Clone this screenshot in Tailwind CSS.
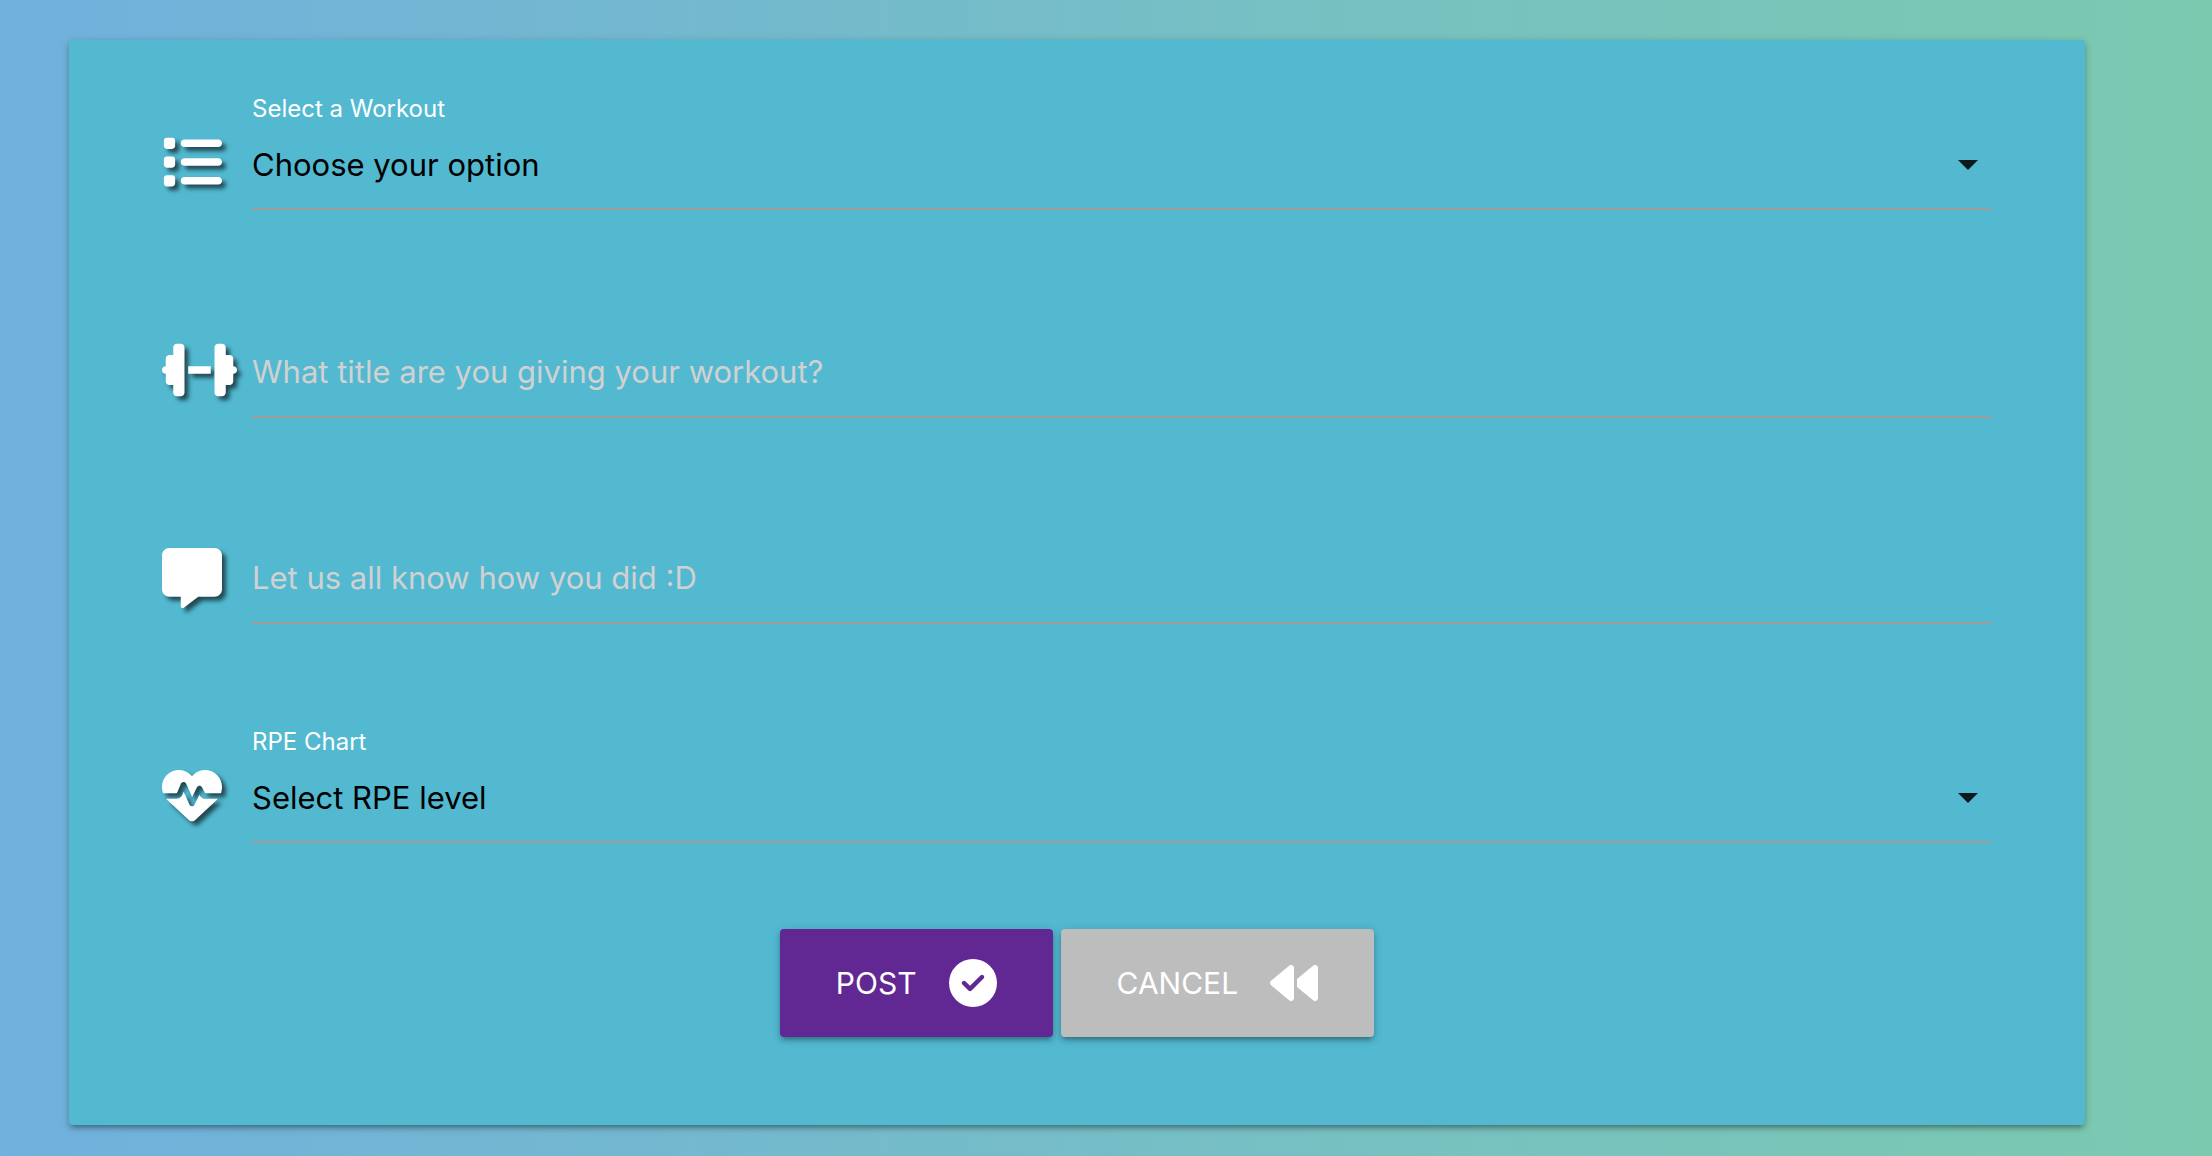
<!DOCTYPE html>
<html lang="en">
<head>
<meta charset="utf-8">
<meta name="viewport" content="width=device-width, initial-scale=1">
<title>Post a workout</title>
<script src="https://cdn.jsdelivr.net/npm/@tailwindcss/browser@4"></script>
</head>
<body class="min-h-screen bg-linear-to-r/srgb from-[#70b1dd] to-[#7bcab0] pt-10 pr-[127px] pb-8 pl-[69px] font-[Inter,sans-serif]">
<form class="rounded-sm bg-[#52b9d1] px-[93px] pt-14 pb-[88px] shadow-[0_4px_4px_0_rgba(0,0,0,0.14),0_6px_2px_-4px_rgba(0,0,0,0.12),0_2px_10px_0_rgba(0,0,0,0.2)]">

  <div class="flex h-[114px]">
    <div class="w-[90px] shrink-0 pt-9">
      <svg class="h-[60px] w-[60px] overflow-visible fill-white drop-shadow-[4px_4px_2px_rgba(0,0,0,0.6)]" viewBox="0 0 512 512" aria-hidden="true"><path d="M40 48C26.700 48 16 58.700 16 72v48c0 13.300 10.700 24 24 24H88c13.300 0 24-10.700 24-24V72c0-13.300-10.700-24-24-24H40zM192 64c-17.700 0-32 14.300-32 32s14.300 32 32 32H480c17.700 0 32-14.300 32-32s-14.300-32-32-32H192zm0 160c-17.700 0-32 14.300-32 32s14.300 32 32 32H480c17.700 0 32-14.300 32-32s-14.300-32-32-32H192zm0 160c-17.700 0-32 14.300-32 32s14.300 32 32 32H480c17.700 0 32-14.300 32-32s-14.300-32-32-32H192zM16 232v48c0 13.300 10.700 24 24 24H88c13.300 0 24-10.700 24-24V232c0-13.300-10.700-24-24-24H40c-13.300 0-24 10.700-24 24zM40 368c-13.300 0-24 10.700-24 24v48c0 13.300 10.700 24 24 24H88c13.300 0 24-10.700 24-24V392c0-13.300-10.700-24-24-24H40z"/></svg>
    </div>
    <div class="flex min-w-0 flex-1 flex-col">
      <label for="workout" class="h-[26px] text-2xl leading-[26px] text-white">Select a Workout</label>
      <div class="relative flex-1 border-b-2 border-[#9e9e9e]">
        <select id="workout" class="h-full w-full appearance-none bg-transparent text-[31px] text-black outline-none"><option>Choose your option</option></select>
        <svg class="pointer-events-none absolute top-[38px] right-[14px] h-[10px] w-5 fill-[#0b1a1d]" viewBox="0 0 20 10" aria-hidden="true"><path d="M0 0h20L10 10z"/></svg>
      </div>
    </div>
  </div>

  <div class="mt-[118px] flex h-[90px]">
    <div class="w-[90px] shrink-0 pt-3">
      <svg class="h-[60px] w-[75px] overflow-visible fill-white drop-shadow-[4px_4px_2px_rgba(0,0,0,0.6)]" viewBox="0 0 640 512" aria-hidden="true"><path d="M96 64c0-17.700 14.300-32 32-32h32c17.700 0 32 14.300 32 32V224v64V448c0 17.700-14.300 32-32 32H128c-17.700 0-32-14.300-32-32V384H64c-17.700 0-32-14.300-32-32V288c-17.700 0-32-14.300-32-32s14.300-32 32-32V160c0-17.700 14.300-32 32-32H96V64zm448 0v64h32c17.700 0 32 14.300 32 32v64c17.700 0 32 14.300 32 32s-14.300 32-32 32v64c0 17.700-14.300 32-32 32H544v64c0 17.700-14.300 32-32 32H480c-17.700 0-32-14.300-32-32V288 224 64c0-17.700 14.300-32 32-32h32c17.700 0 32 14.300 32 32zM416 224v64H224V224H416z"/></svg>
    </div>
    <input type="text" aria-label="Workout title" placeholder="What title are you giving your workout?" class="min-w-0 flex-1 border-b-2 border-[#9e9e9e] bg-transparent text-[31px] text-black outline-none placeholder:text-[#d1d1d1]">
  </div>

  <div class="mt-[116px] flex h-[90px]">
    <div class="w-[90px] shrink-0 pt-3.5">
      <svg class="h-[60px] w-[60px] overflow-visible fill-white drop-shadow-[4px_4px_2px_rgba(0,0,0,0.6)]" viewBox="0 0 512 512" aria-hidden="true"><path d="M64 0C28.700 0 0 28.700 0 64V352c0 35.300 28.700 64 64 64h96v80c0 6.100 3.400 11.600 8.800 14.300s11.900 2.100 16.800-1.500L309.300 416H448c35.300 0 64-28.700 64-64V64c0-35.300-28.700-64-64-64H64z"/></svg>
    </div>
    <input type="text" aria-label="Workout comments" placeholder="Let us all know how you did :D" class="min-w-0 flex-1 border-b-2 border-[#9e9e9e] bg-transparent text-[31px] text-black outline-none placeholder:text-[#d1d1d1]">
  </div>

  <div class="mt-[105px] flex h-[114px]">
    <div class="w-[90px] shrink-0 pt-9">
      <svg class="h-[60px] w-[60px] overflow-visible fill-white drop-shadow-[4px_4px_2px_rgba(0,0,0,0.6)]" viewBox="0 0 512 512" aria-hidden="true"><path d="M228.300 469.100L47.600 300.400c-4.200-3.900-8.200-8.100-11.900-12.400h87c22.600 0 43-13.600 51.700-34.500l10.500-25.200 49.300 109.500c3.800 8.500 12.100 14 21.400 14.100s17.800-5 22-13.300L320 253.700l1.700 3.400c9.500 19 28.900 31 50.100 31H476.300c-3.700 4.300-7.700 8.500-11.900 12.400L283.700 469.100c-7.500 7-17.400 10.900-27.700 10.900s-20.200-3.900-27.700-10.900zM503.700 240h-132c-3 0-5.800-1.700-7.200-4.400l-23.200-46.300c-4.100-8.100-12.400-13.300-21.500-13.300s-17.400 5.100-21.500 13.300l-41.400 82.800L205.900 158.200c-3.900-8.700-12.700-14.300-22.200-14.100s-18.100 5.900-21.800 14.800l-31.800 76.300c-1.200 3-4.200 4.900-7.400 4.900H16c-2.600 0-5 .4-7.300 1.100C3 225.200 0 208.200 0 190.900v-5.800c0-69.900 50.500-129.500 119.400-141C165 36.500 211.400 51.400 244 84l12 12 12-12c32.600-32.600 79-47.500 124.600-39.900C461.500 55.600 512 115.200 512 185.100v5.800c0 16.900-2.800 33.500-8.300 49.100z"/></svg>
    </div>
    <div class="flex min-w-0 flex-1 flex-col">
      <label for="rpe" class="h-[26px] text-2xl leading-[26px] text-white">RPE Chart</label>
      <div class="relative flex-1 border-b-2 border-[#9e9e9e]">
        <select id="rpe" class="h-full w-full appearance-none bg-transparent text-[31px] text-black outline-none"><option>Select RPE level</option></select>
        <svg class="pointer-events-none absolute top-[38px] right-[14px] h-[10px] w-5 fill-[#0b1a1d]" viewBox="0 0 20 10" aria-hidden="true"><path d="M0 0h20L10 10z"/></svg>
      </div>
    </div>
  </div>

  <div class="mt-[86px] flex justify-center gap-2">
    <button type="submit" class="flex h-[108px] items-center gap-8 rounded-sm bg-[#612893] px-14 text-[30px] text-white uppercase shadow-[0_4px_4px_0_rgba(0,0,0,0.14),0_6px_2px_-4px_rgba(0,0,0,0.12),0_2px_10px_0_rgba(0,0,0,0.2)]">Post
      <svg class="size-12 fill-white" viewBox="0 0 512 512" aria-hidden="true"><path d="M256 512A256 256 0 1 0 256 0a256 256 0 1 0 0 512zM369 209L241 337c-9.400 9.400-24.600 9.400-33.900 0l-64-64c-9.400-9.400-9.400-24.600 0-33.900s24.600-9.400 33.900 0l47 47L335 175c9.400-9.400 24.600-9.400 33.900 0s9.400 24.600 0 33.900z"/></svg>
    </button>
    <button type="button" class="flex h-[108px] items-center gap-8 rounded-sm bg-[#bdbdbd] px-14 text-[30px] text-white uppercase shadow-[0_4px_4px_0_rgba(0,0,0,0.14),0_6px_2px_-4px_rgba(0,0,0,0.12),0_2px_10px_0_rgba(0,0,0,0.2)]">Cancel
      <svg class="size-12 fill-white" viewBox="0 0 512 512" aria-hidden="true"><path d="M459.500 440.600c9.500 7.900 22.800 9.700 34.100 4.400s18.400-16.600 18.400-29V96c0-12.400-7.200-23.700-18.400-29s-24.500-3.600-34.100 4.400L288 214.300V256v41.700L459.500 440.600zM256 352V256 128 96c0-12.400-7.200-23.700-18.400-29s-24.500-3.600-34.100 4.400l-192 160C4.200 237.500 0 246.500 0 256s4.200 18.500 11.500 24.600l192 160c9.500 7.900 22.800 9.700 34.100 4.400s18.400-16.600 18.400-29V352z"/></svg>
    </button>
  </div>
</form>
</body>
</html>
